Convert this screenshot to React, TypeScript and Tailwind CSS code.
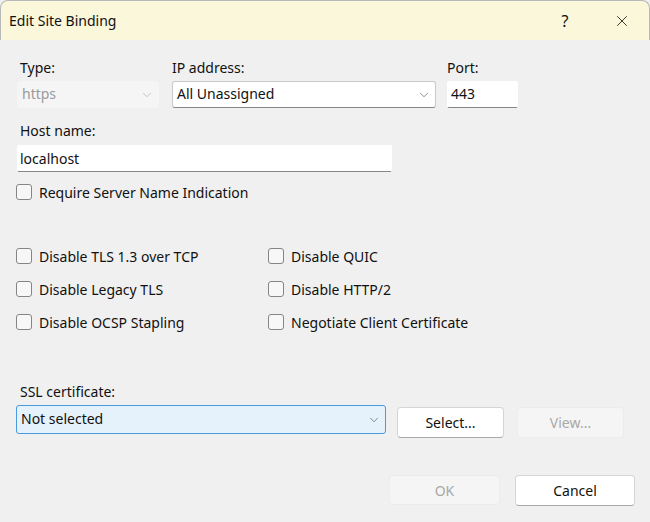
import { ChevronDown, X } from 'lucide-react'

const font = { fontFamily: '"Noto Sans", "Liberation Sans", sans-serif' }

function Check({ label }: { label: string }) {
  return (
    <label className="flex items-center h-[20px] gap-[7px] text-[14px] text-[#111]">
      <span className="w-[16px] h-[16px] rounded-[3px] border border-[#858585] bg-[#f7f7f7] shrink-0" />
      {label}
    </label>
  )
}

function Combo({ value, disabled, focused, className }: { value: string; disabled?: boolean; focused?: boolean; className: string }) {
  let box = 'bg-white border border-[#c9c9c9] border-b-[#868686]'
  if (disabled) box = 'bg-[#f5f5f5] border border-[#f5f5f5]'
  if (focused) box = 'bg-[#e5f1fb] border border-[#4a9ae0]'
  return (
    <div className={`flex items-center justify-between rounded-[3px] pl-[4px] pr-[4px] pb-[2px] ${box} ${className}`}>
      <span className={`text-[14px] ${disabled ? 'text-[#9a9a9a]' : 'text-[#111]'}`}>{value}</span>
      <ChevronDown className={`w-[14px] h-[14px] mt-[2px] ${disabled ? 'text-[#b5b5b5]' : 'text-[#666]'}`} strokeWidth={1.3} />
    </div>
  )
}

function Btn({ label, disabled, className }: { label: string; disabled?: boolean; className: string }) {
  return (
    <button
      className={`flex items-center justify-center rounded-[4px] text-[14px] ${
        disabled
          ? 'bg-[#f5f5f5] border border-[#ececec] text-[#a8a8a8]'
          : 'bg-white border border-[#d5d5d5] border-b-[#a9a9a9] text-[#111]'
      } ${className}`}
    >
      {label}
    </button>
  )
}

export default function App() {
  return (
    <div className="w-[650px] h-[522px] bg-[#f0f0f0] flex flex-col overflow-hidden" style={font}>
      {/* Title bar */}
      <div className="h-[40px] bg-[#fbf7da] border border-b-0 border-[#b9b9b9] rounded-t-[8px] flex items-center pl-[8px] shrink-0">
        <span className="text-[14px] text-[#111] flex-1">Edit Site Binding</span>
        <span className="text-[16px] text-[#111] w-[60px] text-center">?</span>
        <div className="w-[54px] flex justify-center">
          <X className="w-[18px] h-[18px] text-[#111]" strokeWidth={1.1} />
        </div>
      </div>

      <div className="flex flex-col pl-[17px] pt-[18px]">
        {/* Type / IP / Port */}
        <div className="flex gap-[12px]">
          <div className="flex flex-col gap-[3px]">
            <span className="text-[14px] leading-[20px] text-[#111] pl-[3px]">Type:</span>
            <Combo value="https" disabled className="w-[142px] h-[27px]" />
          </div>
          <div className="flex flex-col gap-[3px] ml-[1px]">
            <span className="text-[14px] leading-[20px] text-[#111]">IP address:</span>
            <Combo value="All Unassigned" className="w-[264px] h-[27px]" />
          </div>
          <div className="flex flex-col gap-[3px] -ml-[1px]">
            <span className="text-[14px] leading-[20px] text-[#111]">Port:</span>
            <div className="w-[71px] h-[27px] bg-white border border-white border-b-[#868686] rounded-[2px] flex items-center pl-[3px] pb-[2px] text-[14px] text-[#111]">
              443
            </div>
          </div>
        </div>

        {/* Host name */}
        <div className="flex flex-col gap-[4px] mt-[13px]">
          <span className="text-[14px] leading-[20px] text-[#111] pl-[3px]">Host name:</span>
          <div className="w-[375px] h-[27px] bg-white border border-white border-b-[#868686] rounded-[2px] flex items-center pl-[2px] pb-[1px] text-[14px] text-[#111]">
            localhost
          </div>
        </div>

        <div className="mt-[10px] -ml-[1px]">
          <Check label="Require Server Name Indication" />
        </div>

        {/* Protocol options */}
        <div className="grid grid-cols-[252px_1fr] gap-y-[13px] mt-[44px] -ml-[1px]">
          <Check label="Disable TLS 1.3 over TCP" />
          <Check label="Disable QUIC" />
          <Check label="Disable Legacy TLS" />
          <Check label="Disable HTTP/2" />
          <Check label="Disable OCSP Stapling" />
          <Check label="Negotiate Client Certificate" />
        </div>

        {/* SSL certificate */}
        <div className="flex flex-col gap-[3px] mt-[50px]">
          <span className="text-[14px] leading-[20px] text-[#111] pl-[3px]">SSL certificate:</span>
          <div className="flex items-start -ml-[1px]">
            <Combo value="Not selected" focused className="w-[370px] h-[29px]" />
            <Btn label="Select..." className="w-[107px] h-[31px] ml-[11px] mt-[2px]" />
            <Btn label="View..." disabled className="w-[107px] h-[31px] ml-[13px] mt-[2px]" />
          </div>
        </div>

        {/* Footer */}
        <div className="flex justify-end gap-[15px] mt-[37px] pr-[15px]">
          <Btn label="OK" disabled className="w-[111px] h-[30px]" />
          <Btn label="Cancel" className="w-[120px] h-[31px]" />
        </div>
      </div>
    </div>
  )
}
